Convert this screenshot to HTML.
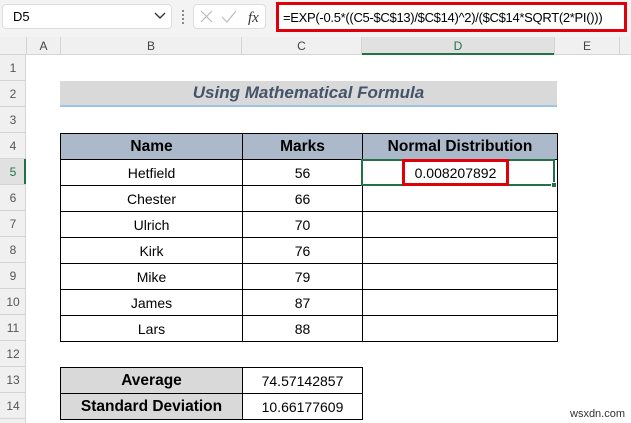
<!DOCTYPE html>
<html><head><style>
*{margin:0;padding:0;box-sizing:border-box}
body{width:631px;height:423px;overflow:hidden;background:#fff;font-family:"Liberation Sans",sans-serif;position:relative}
.a{position:absolute}
.c{position:absolute;display:flex;align-items:center;justify-content:center;font-size:14px;color:#000}
</style></head><body>
<div class="a" style="left:0;top:0;width:631px;height:37px;background:#f3f3f3"></div>
<div class="a" style="left:2px;top:4px;width:170px;height:25px;background:#fff;border:1px solid #ddd;border-radius:4px;font-size:13px;padding:4px 0 0 10px">D5</div>
<svg class="a" style="left:154px;top:12px" width="12" height="8"><path d="M1 1 L6 6 L11 1" stroke="#333" stroke-width="1.4" fill="none"/></svg>
<div class="a" style="left:182px;top:10px;width:2px;height:14px;border-left:2px dotted #888"></div>
<div class="a" style="left:193px;top:4px;width:73px;height:25px;background:#fff;border:1px solid #ddd;border-radius:4px"></div>
<svg class="a" style="left:198px;top:9px" width="70" height="16"><path d="M3 2 L14 13 M14 2 L3 13" stroke="#bbb" stroke-width="1.2"/><path d="M24 8 L29 13 L38 2" stroke="#bbb" stroke-width="1.2" fill="none"/><text x="50" y="13" font-family="Liberation Serif" font-style="italic" font-size="15" fill="#333">fx</text></svg>
<div class="a" style="left:276px;top:2px;width:351px;height:30px;background:#fff;border:3px solid #e0000b;font-size:13px;letter-spacing:-0.3px;padding:5px 0 0 4px;white-space:nowrap;overflow:hidden">=EXP(-0.5*((C5-$C$13)/$C$14)^2)/($C$14*SQRT(2*PI()))</div>
<div class="a" style="left:0;top:37px;width:631px;height:18px;background:#f0f0f0;border-bottom:1px solid #d4d4d4"></div>
<div class="a" style="left:0;top:55px;width:26px;height:368px;background:#f0f0f0;border-right:1px solid #d4d4d4"></div>
<div class="a" style="left:361px;top:37px;width:193px;height:18px;background:#e1e1e1;border-bottom:2px solid #217346"></div>
<div class="a" style="left:0;top:159px;width:26px;height:26px;background:#e1e1e1;border-right:2px solid #217346"></div>
<div class="c" style="left:26px;top:37px;width:34px;height:18px;font-size:12px;color:#444;border-left:1px solid #d4d4d4">A</div>
<div class="c" style="left:60px;top:37px;width:181px;height:18px;font-size:12px;color:#444;border-left:1px solid #d4d4d4">B</div>
<div class="c" style="left:241px;top:37px;width:120px;height:18px;font-size:12px;color:#444;border-left:1px solid #d4d4d4">C</div>
<div class="c" style="left:361px;top:37px;width:193px;height:18px;font-size:12px;color:#217346;border-left:1px solid #d4d4d4">D</div>
<div class="c" style="left:554px;top:37px;width:66px;height:18px;font-size:12px;color:#444;border-left:1px solid #d4d4d4;border-right:1px solid #d4d4d4">E</div>
<div id="rn"></div>
<div class="c" style="left:60px;top:81px;width:497px;height:26px;background:#d9d9d9;border-bottom:2px solid #9dc3e6;font-weight:bold;font-style:italic;font-size:17px;color:#44546a">Using Mathematical Formula</div>
<div class="a" style="left:60px;top:133px;width:497px;height:26px;background:#acb9ca"></div>
<div id="t"></div>
<div class="a" style="left:60px;top:367px;width:182px;height:52px;background:#d9d9d9"></div>
<div id="t2"></div>
<div class="a" style="left:361px;top:159px;width:194px;height:27px;border:2px solid #217346"></div>
<div class="a" style="left:551px;top:182px;width:6px;height:6px;background:#217346;border:1px solid #fff"></div>
<div class="c" style="left:402px;top:159px;width:107px;height:27px;border:3px solid #e0000b;background:#fff;font-size:14px">0.008207892</div>
<div class="a" style="left:570px;top:408px;font-size:11px;color:#333">wsxdn.com</div>
<script>
var h='';for(var i=1;i<=14;i++){h+='<div class="c" style="left:0;top:'+(55+26*(i-1))+'px;width:26px;height:26px;font-size:12px;color:'+(i==5?'#217346':'#555')+';border-bottom:1px solid #d4d4d4">'+i+'</div>';}
document.getElementById('rn').innerHTML=h;
var rows=[['Name','Marks','Normal Distribution'],['Hetfield','56',''],['Chester','66',''],['Ulrich','70',''],['Kirk','76',''],['Mike','79',''],['James','87',''],['Lars','88','']];
var x=[60,242,362,557],t='';
rows.forEach(function(r,i){var y=133+26*i;for(var j=0;j<3;j++){t+='<div class="c" style="left:'+x[j]+'px;top:'+y+'px;width:'+(x[j+1]-x[j]+1)+'px;height:27px;border:1px solid #000;'+(i==0?'font-weight:bold;font-size:15.5px':'')+'">'+r[j]+'</div>';}});
document.getElementById('t').innerHTML=t;
var r2=[['Average','74.57142857'],['Standard Deviation','10.66177609']],s='';
r2.forEach(function(r,i){var y=367+26*i;s+='<div class="c" style="left:60px;top:'+y+'px;width:183px;height:27px;border:1px solid #000;font-weight:bold;font-size:15.5px">'+r[0]+'</div><div class="c" style="left:242px;top:'+y+'px;width:121px;height:27px;border:1px solid #000">'+r[1]+'</div>';});
document.getElementById('t2').innerHTML=s;
</script>
</body></html>
